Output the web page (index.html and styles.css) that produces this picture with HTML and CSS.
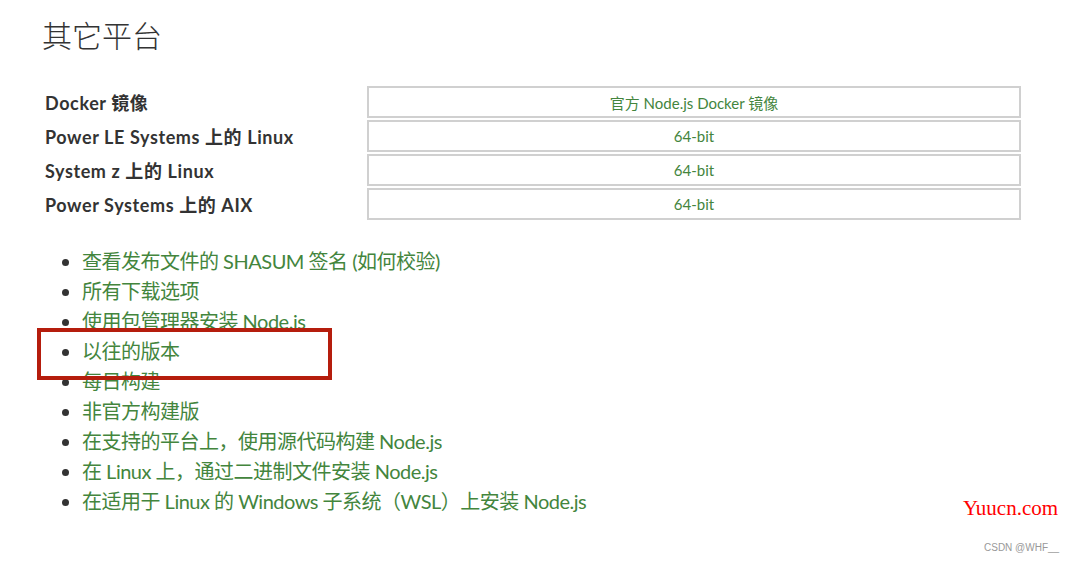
FILE: index.html
```html
<!DOCTYPE html>
<html lang="zh-CN">
  <head>
    <meta charset="utf-8"/>
    <title>其它平台</title>
    <link rel="stylesheet" href="styles.css">
  </head>

  <body>
    <main class="page">
      <h2 class="title">其它平台</h2>

      <table class="platforms">
        <tr>
          <th>Docker 镜像</th>
          <td><a href="#">官方 Node.js Docker 镜像</a></td>
        </tr>
        <tr>
          <th>Power LE Systems 上的 Linux</th>
          <td><a href="#">64-bit</a></td>
        </tr>
        <tr>
          <th>System z 上的 Linux</th>
          <td><a href="#">64-bit</a></td>
        </tr>
        <tr>
          <th>Power Systems 上的 AIX</th>
          <td><a href="#">64-bit</a></td>
        </tr>
      </table>

      <ul class="links">
        <li><a href="#">查看发布文件的 SHASUM 签名</a> <a href="#">(如何校验)</a></li>
        <li><a href="#">所有下载选项</a></li>
        <li><a href="#">使用包管理器安装 Node.js</a></li>
        <li class="marked"><a href="#">以往的版本</a></li>
        <li><a href="#">每日构建</a></li>
        <li><a href="#">非官方构建版</a></li>
        <li><a href="#">在支持的平台上，使用源代码构建 Node.js</a></li>
        <li><a href="#">在 Linux 上，通过二进制文件安装 Node.js</a></li>
        <li><a href="#">在适用于 Linux 的 Windows 子系统（WSL）上安装 Node.js</a></li>
      </ul>
    </main>

    <div class="watermark">Yuucn.com</div>
    <div class="credit">CSDN @WHF__</div>
  </body>

</html>
```

FILE: styles.css
```css
body {
    background-color: #fff;
    color: #333;
    font-family: Lato, "Noto Sans CJK SC", sans-serif;
    margin: 0;
}

* {
    box-sizing: border-box;
}

a {
    color: #43853d;
    text-decoration: none;
}

.page {
    padding: 15px 52px 0 42px;
    position: relative;
}

.title {
    font-size: 30px;
    font-weight: 300;
    line-height: 40px;
    margin: 0 0 29px;
}

.platforms {
    width: 980px;
    border-spacing: 2px;
    margin-left: 1px;
}

.platforms th {
    text-align: left;
    font-size: 18px;
    font-weight: 700;
    letter-spacing: 0.6px;
    padding: 0;
    height: 32px;
    width: 320px;
}

.platforms td {
    border: 2px solid #d0d0d0;
    text-align: center;
    font-size: 15px;
    height: 32px;
    padding: 0;
}

.links {
    margin: 24px 0 0;
    padding-left: 40px;
    font-size: 20px;
    line-height: 30px;
    letter-spacing: -0.5px;
}

.links li::marker {
    color: #333;
}

.marked {
    position: relative;
}

/* red annotation frame drawn over the item */
.marked::after {
    content: "";
    position: absolute;
    left: -45px;
    top: -8px;
    width: 287px;
    height: 44px;
    border: 4px solid #b51d0d;
}

.watermark {
    position: absolute;
    left: 963px;
    top: 496px;
    font-family: "Liberation Serif", serif;
    font-size: 21px;
    color: #f00;
}

.credit {
    position: absolute;
    left: 984px;
    top: 542px;
    font-family: "Liberation Sans", sans-serif;
    font-size: 10px;
    color: #999;
}
```
